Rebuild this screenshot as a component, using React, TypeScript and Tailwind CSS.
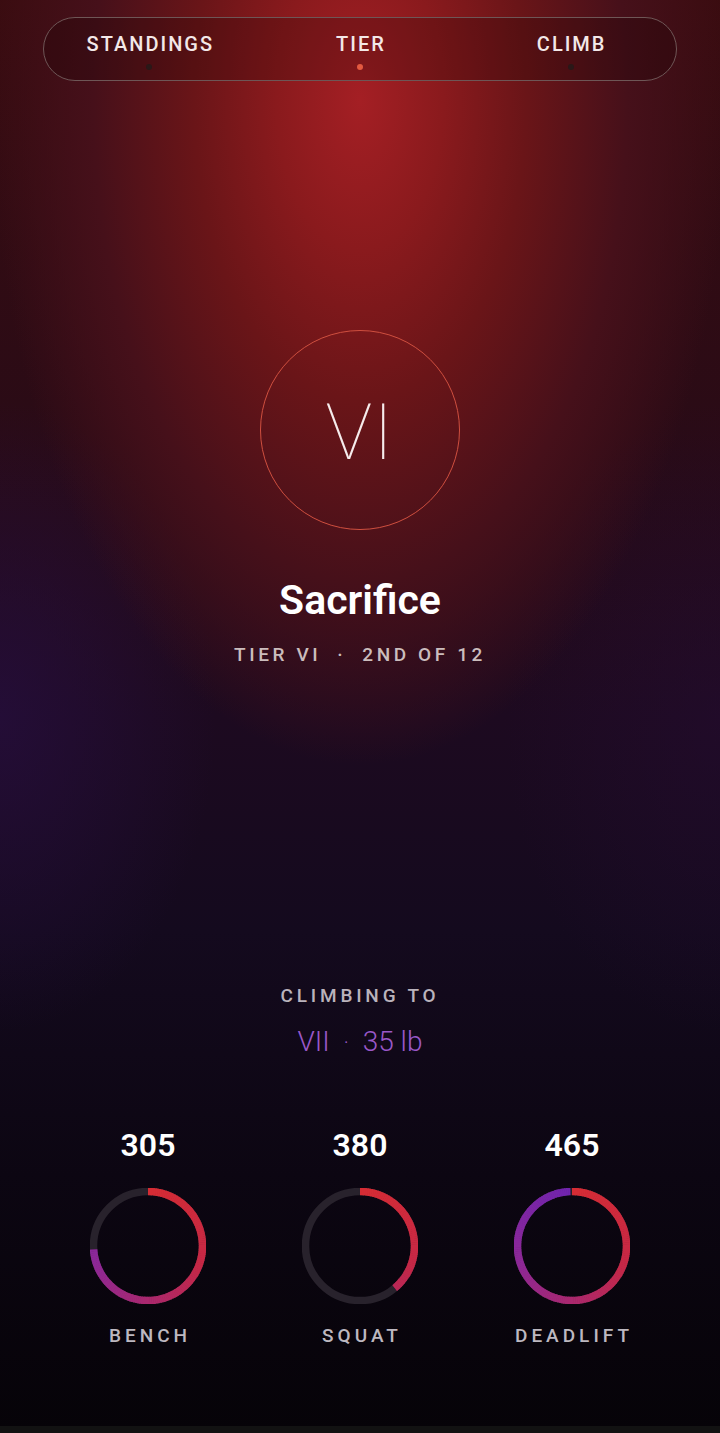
import React from "react";

function lerp(a: number, b: number, t: number) {
  return a + (b - a) * t;
}
const stops: [number, [number, number, number]][] = [
  [0, [214, 44, 52]],
  [110, [198, 40, 70]],
  [180, [170, 40, 110]],
  [250, [142, 40, 150]],
  [360, [112, 36, 175]],
];
function colorAt(deg: number) {
  for (let i = 0; i < stops.length - 1; i++) {
    const [a, ca] = stops[i];
    const [b, cb] = stops[i + 1];
    if (deg >= a && deg <= b) {
      const t = (deg - a) / (b - a);
      return `rgb(${Math.round(lerp(ca[0], cb[0], t))},${Math.round(lerp(ca[1], cb[1], t))},${Math.round(lerp(ca[2], cb[2], t))})`;
    }
  }
  return "rgb(112,36,175)";
}

function Ring({ frac }: { frac: number }) {
  const r = 54.5;
  const c = 58;
  const end = 360 * frac;
  const segs: React.ReactNode[] = [];
  const step = 2;
  for (let a = 0; a < end; a += step) {
    const a2 = Math.min(end, a + step + 0.6);
    const r1 = ((a - 90) * Math.PI) / 180;
    const r2 = ((a2 - 90) * Math.PI) / 180;
    const x1 = c + r * Math.cos(r1);
    const y1 = c + r * Math.sin(r1);
    const x2 = c + r * Math.cos(r2);
    const y2 = c + r * Math.sin(r2);
    segs.push(
      <path
        key={a}
        d={`M ${x1} ${y1} A ${r} ${r} 0 0 1 ${x2} ${y2}`}
        stroke={colorAt(a + step / 2)}
        strokeWidth={7.5}
        fill="none"
      />
    );
  }
  return (
    <svg width={116} height={116} viewBox="0 0 116 116">
      <circle cx={c} cy={c} r={r} stroke="#28222c" strokeWidth={7.5} fill="none" />
      {segs}
    </svg>
  );
}

const lifts = [
  { v: "305", label: "BENCH", frac: 0.74 },
  { v: "380", label: "SQUAT", frac: 0.39 },
  { v: "465", label: "DEADLIFT", frac: 0.995 },
];

export default function App() {
  return (
    <div
      className="relative flex min-h-[1433px] w-[720px] flex-col items-center overflow-hidden font-['Roboto','Liberation_Sans',sans-serif]"
      style={{
        background:
          "radial-gradient(ellipse 64% 58% at 50% 7%, #a41f24 0%, #8a1a1d 18%, #6a1518 36%, #46101a 58%, rgba(40,10,24,0) 80%), radial-gradient(ellipse 30% 22% at 0% 50%, rgba(38,14,62,0.75) 0%, rgba(38,14,62,0) 100%), radial-gradient(ellipse 30% 22% at 100% 50%, rgba(36,12,48,0.55) 0%, rgba(36,12,48,0) 100%), linear-gradient(to bottom, #3a0c10 0%, #2a0b16 30%, #1d0a20 50%, #140a1e 65%, #0c0612 82%, #060308 100%)",
      }}
    >
      {/* Nav */}
      <div className="mt-[17px] w-[634px] h-[64px] rounded-full border border-[#6e5656] bg-[rgba(20,0,0,0.22)] grid grid-cols-3 items-center">
        {[
          { t: "STANDINGS", active: false },
          { t: "TIER", active: true },
          { t: "CLIMB", active: false },
        ].map((n) => (
          <div key={n.t} className="flex flex-col items-center pt-[4px]">
            <span className="text-[20px] leading-[24px] font-medium tracking-[2px] pl-[2px] text-[#f3e8e8]">
              {n.t}
            </span>
            <span
              className={
                n.active
                  ? "mt-[8px] h-[6px] w-[6px] rounded-full bg-[#e35a40]"
                  : "mt-[8px] h-[6px] w-[6px] rounded-full bg-[#2a1818]"
              }
            />
          </div>
        ))}
      </div>

      {/* Tier circle */}
      <div className="mt-[249px] h-[200px] w-[200px] rounded-full border-[1.5px] border-[#cf4f3f] flex items-center justify-center">
        <span className="text-[78px] leading-none font-thin text-[#f6ecec] tracking-[1px] mt-[6px]">
          VI
        </span>
      </div>

      <div className="mt-[46px] text-[41px] leading-[48px] font-semibold text-white">
        Sacrifice
      </div>
      <div className="mt-[19px] text-[19px] leading-[24px] font-medium tracking-[3.6px] text-[#cbbdbd] flex items-center">
        <span>TIER VI</span>
        <span className="mx-[16px]">·</span>
        <span>2ND OF 12</span>
      </div>

      <div className="mt-[317px] text-[19px] leading-[24px] font-medium tracking-[3.8px] text-[#bab3bc]">
        CLIMBING TO
      </div>
      <div className="mt-[16px] text-[28px] leading-[36px] font-light text-[#9a58c8] flex items-center">
        <span>VII</span>
        <span className="mx-[14px] text-[20px]">·</span>
        <span>35 lb</span>
      </div>

      <div className="mt-[65px] grid w-full grid-cols-3 px-[42px]">
        {lifts.map((l) => (
          <div key={l.label} className="flex flex-col items-center">
            <div className="text-[32px] leading-[40px] font-semibold text-white">{l.v}</div>
            <div className="mt-[23px]">
              <Ring frac={l.frac} />
            </div>
            <div className="mt-[20px] pl-[4px] text-[19px] leading-[24px] font-medium tracking-[4px] text-[#bdb8c0]">
              {l.label}
            </div>
          </div>
        ))}
      </div>

      <div className="absolute bottom-0 left-0 h-[7px] w-full bg-[#121212]" />
    </div>
  );
}
